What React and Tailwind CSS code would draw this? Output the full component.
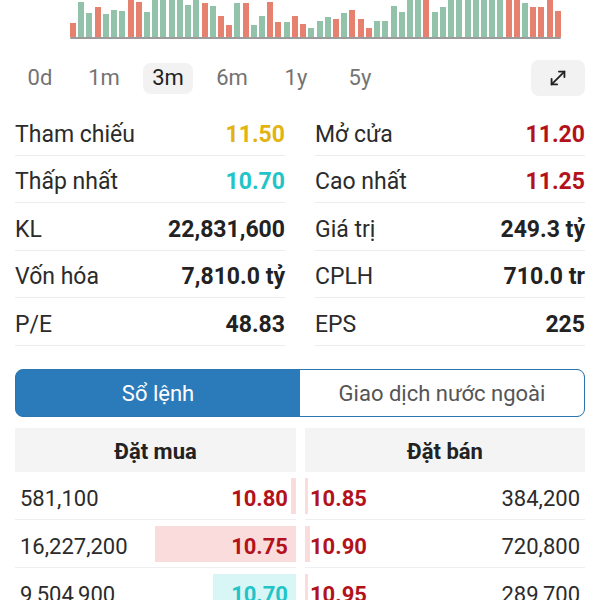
import React from "react";

const bars = [
  ["r", 23], ["g", 2], ["g", 13], ["r", 7], ["g", 14], ["g", 10], ["g", 11], ["r", 0], ["r", 2], ["g", 12],
  ["g", 0], ["g", 0], ["g", 0], ["g", 0], ["g", 5], ["g", 0], ["r", 3], ["g", 6], ["r", 16], ["r", 25],
  ["g", 3], ["r", 3], ["g", 25], ["g", 16], ["r", 2], ["r", 22], ["g", 22], ["r", 16], ["r", 24], ["g", 28],
  ["g", 21], ["g", 17], ["r", 19], ["g", 13], ["r", 10], ["r", 19], ["r", 28], ["g", 21], ["g", 21], ["g", 6],
  ["g", 12], ["g", 0], ["g", 0], ["r", 0], ["g", 12], ["g", 7], ["g", 0], ["g", 0], ["g", 0], ["g", 0],
  ["g", 0], ["g", 0], ["g", 0], ["r", 0], ["r", 0], ["g", 3], ["r", 7], ["r", 7], ["r", 0], ["r", 11],
];

const stats = [
  [["Tham chiếu", "11.50", "text-[#e3b312]"], ["Mở cửa", "11.20", "text-[#b3121b]"]],
  [["Thấp nhất", "10.70", "text-[#22c4c8]"], ["Cao nhất", "11.25", "text-[#b3121b]"]],
  [["KL", "22,831,600", "text-[#222222]"], ["Giá trị", "249.3 tỷ", "text-[#222222]"]],
  [["Vốn hóa", "7,810.0 tỷ", "text-[#222222]"], ["CPLH", "710.0 tr", "text-[#222222]"]],
  [["P/E", "48.83", "text-[#222222]"], ["EPS", "225", "text-[#222222]"]],
];

const orders = [
  { bv: "581,100", bp: "10.80", bc: "text-[#b3121b]", bw: 5, bbg: "bg-[#fbdcdc]", sp: "10.85", sv: "384,200", sw: 3 },
  { bv: "16,227,200", bp: "10.75", bc: "text-[#b3121b]", bw: 141, bbg: "bg-[#fbdcdc]", sp: "10.90", sv: "720,800", sw: 5 },
  { bv: "9,504,900", bp: "10.70", bc: "text-[#22c4c8]", bw: 83, bbg: "bg-[#d8f6f6]", sp: "10.95", sv: "289,700", sw: 3 },
];

function ExpandIcon() {
  return (
    <svg width="22" height="22" viewBox="0 0 24 24" fill="none" stroke="#222" strokeWidth="2" strokeLinecap="round" strokeLinejoin="round">
      <path d="M11 19H5v-6" />
      <path d="M13 5h6v6" />
      <path d="M19 5 5 19" />
    </svg>
  );
}

export default function App() {
  const ranges = ["0d", "1m", "3m", "6m", "1y", "5y"];
  return (
    <div className="w-[600px] h-[600px] overflow-hidden bg-white font-['Roboto','Liberation_Sans',sans-serif] text-[22px] leading-none">
      {/* chart */}
      <div className="pl-[70px]">
        <div className="w-[491px]">
          <div className="h-[37px] overflow-hidden flex items-end justify-between">
            {bars.map(([c, top], i) => (
              <div
                key={i}
                className={c === "g" ? "w-[6px] bg-[#93c2aa]" : "w-[6px] bg-[#e6806f]"}
                style={{ height: 37 - top + "px" }}
              />
            ))}
          </div>
          <div className="h-[2px] rounded-full bg-[#9c9c9c]" />
        </div>
      </div>

      {/* range row */}
      <div className="mt-[21px] h-[36px] flex items-center px-[15px]">
        <div className="flex items-center gap-[14px]">
          {ranges.map((r) => (
            <div
              key={r}
              className={
                r === "3m"
                  ? "w-[50px] h-[31px] rounded-[8px] bg-[#f2f2f2] flex items-center justify-center text-[#222222]"
                  : "w-[50px] h-[31px] rounded-[8px] flex items-center justify-center text-[#737373]"
              }
            >
              {r}
            </div>
          ))}
        </div>
        <div className="ml-auto w-[54px] h-[36px] rounded-[8px] bg-[#f2f2f2] flex items-center justify-center">
          <ExpandIcon />
        </div>
      </div>

      {/* stats */}
      <div className="mt-[12px] px-[15px] grid grid-cols-2 gap-x-[30px]">
        {stats.map((row, ri) =>
          row.map(([label, value, color], ci) => (
            <div
              key={ri + "-" + ci}
              className="h-[47.5px] pt-[6px] border-b border-[#ececec] flex items-center justify-between text-[23px]"
            >
              <span className="text-[#2b2b2b]">{label}</span>
              <span className={"font-bold " + color}>{value}</span>
            </div>
          ))
        )}
      </div>

      {/* tabs */}
      <div className="mt-[23px] mx-[15px] h-[48px] pt-[3px] rounded-[8px] border-[1.5px] border-[#2a76ae] flex overflow-hidden bg-[#2b7bba]">
        <div className="flex-1 -mt-[3px] pt-[3px] bg-[#2b7bba] text-white flex items-center justify-center">Sổ lệnh</div>
        <div className="flex-1 -mt-[3px] pt-[3px] bg-white text-[#555555] flex items-center justify-center">Giao dịch nước ngoài</div>
      </div>

      {/* order book header */}
      <div className="mt-[11px] px-[15px] flex gap-[9px]">
        <div className="w-[281px] h-[44px] pt-[4px] bg-[#f4f4f4] flex items-center justify-center font-bold text-[#222222]">Đặt mua</div>
        <div className="flex-1 h-[44px] pt-[4px] bg-[#f4f4f4] flex items-center justify-center font-bold text-[#222222]">Đặt bán</div>
      </div>

      {/* order rows */}
      <div className="px-[15px]">
        {orders.map((o, i) => (
          <div key={i} className="flex gap-[9px]">
            <div className="relative w-[281px] h-[48px] pt-[7px] border-b border-[#efefef] flex items-center justify-between pl-[5px] pr-[8px]">
              <div className={"absolute right-0 top-[6px] bottom-[5px] " + o.bbg} style={{ width: o.bw + "px" }} />
              <span className="relative text-[#2b2b2b]">{o.bv}</span>
              <span className={"relative font-bold " + o.bc}>{o.bp}</span>
            </div>
            <div className="relative flex-1 h-[48px] pt-[7px] border-b border-[#efefef] flex items-center justify-between pl-[5px] pr-[5px]">
              <div className="absolute left-0 top-[6px] bottom-[5px] bg-[#fbdcdc]" style={{ width: o.sw + "px" }} />
              <span className="relative font-bold text-[#b3121b]">{o.sp}</span>
              <span className="relative text-[#2b2b2b]">{o.sv}</span>
            </div>
          </div>
        ))}
      </div>
    </div>
  );
}
